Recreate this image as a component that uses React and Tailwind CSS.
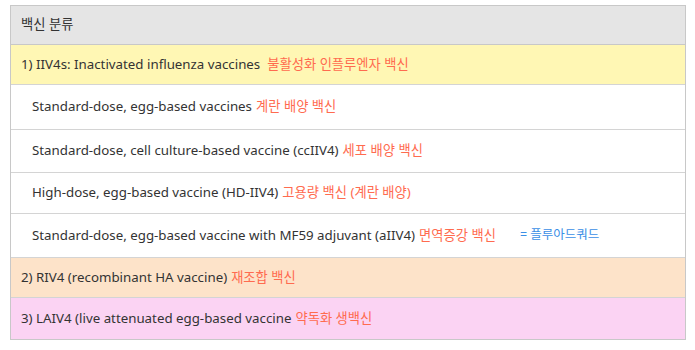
const rows = [
  { en: "1) IIV4s: Inactivated influenza vaccines", ko: "불활성화 인플루엔자 백신", bg: "bg-[#fff7b4]", indent: false, h: "h-[40px]", gap: true },
  { en: "Standard-dose, egg-based vaccines", ko: "계란 배양 백신", bg: "bg-white", indent: true, h: "h-[45px]" },
  { en: "Standard-dose, cell culture-based vaccine (ccIIV4)", ko: "세포 배양 백신", bg: "bg-white", indent: true, h: "h-[43px]" },
  { en: "High-dose, egg-based vaccine (HD-IIV4)", ko: "고용량 백신 (계란 배양)", bg: "bg-white", indent: true, h: "h-[41px]" },
  { en: "Standard-dose, egg-based vaccine with MF59 adjuvant (aIIV4)", ko: "면역증강 백신", bg: "bg-white", indent: true, h: "h-[44px]", note: "= 플루아드쿼드" },
  { en: "2) RIV4 (recombinant HA vaccine)", ko: "재조합 백신", bg: "bg-[#fde3c9]", indent: false, h: "h-[40px]" },
  { en: "3) LAIV4 (live attenuated egg-based vaccine", ko: "약독화 생백신", bg: "bg-[#fbd3f3]", indent: false, h: "h-[41px]" },
];

function Row({ row, last }) {
  return (
    <div
      className={`flex items-center ${row.h} ${row.bg} ${row.indent ? "pl-[21px]" : "pl-[10px]"} ${last ? "" : "border-b border-[#d4d4d4]"}`}
    >
      <span className="text-[#333333]">{row.en}</span>
      <span className={`text-[#ff6b4f] ${row.gap ? "ml-[7px]" : "ml-[4px]"}`}>{row.ko}</span>
      {row.note && <span className="ml-[24px] text-[12.5px] text-[#3b8fe6]">{row.note}</span>}
    </div>
  );
}

export default function App() {
  return (
    <div className="w-[695px] h-[350px] bg-white pt-[5px] pl-[10px] font-['Noto_Sans','Noto_Sans_CJK_KR',sans-serif] text-[13.3px]">
      <div className="w-[676px] border border-[#c8c8c8]">
        <div className="flex items-center h-[39px] pl-[10px] bg-[#e5e5e5] border-b border-[#c8c8c8] text-[#333333]">
          백신 분류
        </div>
        {rows.map((row, i) => (
          <Row key={i} row={row} last={i === rows.length - 1} />
        ))}
      </div>
    </div>
  );
}
